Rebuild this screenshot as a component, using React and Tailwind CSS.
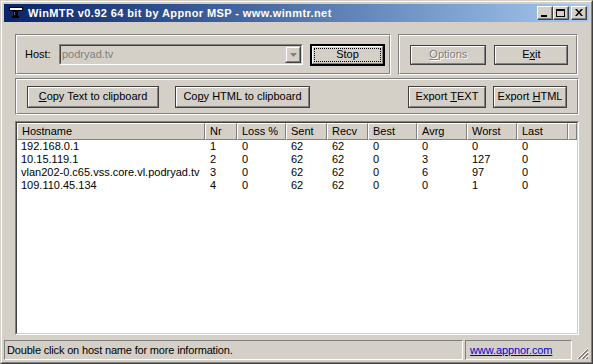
import React from 'react';

const FONT = "font-['Liberation_Sans',Arial,sans-serif]";

const COLUMNS = [
  { key: 'host',  label: 'Hostname', w: 'w-[188px]' },
  { key: 'nr',    label: 'Nr',       w: 'w-[32px]' },
  { key: 'loss',  label: 'Loss %',   w: 'w-[49px]' },
  { key: 'sent',  label: 'Sent',     w: 'w-[41px]' },
  { key: 'recv',  label: 'Recv',     w: 'w-[41px]' },
  { key: 'best',  label: 'Best',     w: 'w-[49px]' },
  { key: 'avrg',  label: 'Avrg',     w: 'w-[50px]' },
  { key: 'worst', label: 'Worst',    w: 'w-[50px]' },
  { key: 'last',  label: 'Last',     w: 'w-[51px]' },
];

const HOPS = [
  { host: '192.168.0.1',                        nr: 1, loss: 0, sent: 62, recv: 62, best: 0, avrg: 0, worst: 0,   last: 0 },
  { host: '10.15.119.1',                        nr: 2, loss: 0, sent: 62, recv: 62, best: 0, avrg: 3, worst: 127, last: 0 },
  { host: 'vlan202-0.c65.vss.core.vl.podryad.tv', nr: 3, loss: 0, sent: 62, recv: 62, best: 0, avrg: 6, worst: 97,  last: 0 },
  { host: '109.110.45.134',                     nr: 4, loss: 0, sent: 62, recv: 62, best: 0, avrg: 0, worst: 1,   last: 0 },
];

// etched group frame (dark line + white line)
function GroupBox({ className, innerClass, children }) {
  return (
    <div className={`border border-t-[#808080] border-l-[#808080] border-r-white border-b-white ${className}`}>
      <div className={`h-full border border-t-white border-l-white border-r-[#808080] border-b-[#808080] flex items-center ${innerClass}`}>
        {children}
      </div>
    </div>
  );
}

function Button({ className = '', disabled, children }) {
  return (
    <div className={`border border-[#404040] ${className}`}>
      <div className="h-full border border-t-white border-l-white border-r-[#808080] border-b-[#808080] flex items-center justify-center">
        {disabled ? (
          <span className="relative text-[#808080] [text-shadow:1px_1px_0_#ffffff]">{children}</span>
        ) : (
          <span className="text-black">{children}</span>
        )}
      </div>
    </div>
  );
}

function TitleButton({ children }) {
  return (
    <div className="w-[16px] h-[14px] bg-[#d4d0c8] border border-t-white border-l-white border-r-[#404040] border-b-[#404040]">
      <div className="h-full border-r border-b border-[#808080] flex items-center justify-center">
        {children}
      </div>
    </div>
  );
}

function AppIcon() {
  return (
    <svg width="14" height="12" viewBox="0 0 14 12" className="shrink-0">
      <rect x="0.5" y="0.5" width="13" height="3" fill="#ffffff" stroke="#000000" />
      <rect x="4" y="4" width="5" height="7" fill="#000000" />
      <rect x="5" y="5" width="1" height="3" fill="#6b6b6b" />
      <rect x="3" y="9" width="7" height="2" fill="#000000" />
    </svg>
  );
}

export default function App() {
  return (
    <div className={`w-[593px] h-[364px] bg-[#d4d0c8] border border-t-[#d4d0c8] border-l-[#d4d0c8] border-r-[#404040] border-b-[#404040] ${FONT} text-[11px] leading-none select-none`}>
      <div className="h-full border border-t-white border-l-white border-r-[#808080] border-b-[#808080] p-[2px] flex flex-col">

        {/* title bar */}
        <div className="h-[18px] shrink-0 bg-gradient-to-r from-[#0a246a] to-[#a6caf0] flex items-center pl-[5px] pr-[2px]">
          <AppIcon />
          <span className="ml-[5px] text-white font-bold text-[11px] tracking-[0.4px]">
            WinMTR v0.92 64 bit by Appnor MSP - www.winmtr.net
          </span>
          <div className="ml-auto flex items-center">
            <TitleButton>
              <div className="w-[6px] h-[2px] bg-black mt-[6px] -ml-[1px]" />
            </TitleButton>
            <TitleButton>
              <div className="w-[9px] h-[8px] border border-black border-t-2" />
            </TitleButton>
            <div className="w-[2px]" />
            <TitleButton>
              <svg width="8" height="7" viewBox="0 0 8 7">
                <path d="M0 0h2l2 2.5L6 0h2L5 3.5 8 7H6L4 4.5 2 7H0l3-3.5z" fill="#000" />
              </svg>
            </TitleButton>
          </div>
        </div>

        {/* client */}
        <div className="flex-1 flex flex-col px-[11px] pt-[12px]">
          <div className="flex gap-[7px]">
            <GroupBox className="w-[377px] h-[41px]" innerClass="pl-[8px]">
              <span className="w-[34px]">Host:</span>
              <div className="w-[244px] h-[21px] border border-t-[#808080] border-l-[#808080] border-r-white border-b-white">
                <div className="h-full border border-t-[#404040] border-l-[#404040] border-r-[#d4d0c8] border-b-[#d4d0c8] flex items-center">
                  <span className="flex-1 pl-[1px] text-[#808080]">podryad.tv</span>
                  <div className="w-[16px] h-full border border-t-[#d4d0c8] border-l-[#d4d0c8] border-r-[#404040] border-b-[#404040]">
                    <div className="h-full border border-t-white border-l-white border-r-[#808080] border-b-[#808080] flex items-center justify-center">
                      <svg width="7" height="4" viewBox="0 0 7 4">
                        <path d="M0 0h7L3.5 4z" fill="#808080" />
                      </svg>
                    </div>
                  </div>
                </div>
              </div>
              <div className="ml-[7px] w-[75px] h-[22px] border-2 border-black">
                <div className="h-full border border-t-white border-l-white border-r-[#808080] border-b-[#808080] p-[1px]">
                  <div className="h-full border border-dotted border-black flex items-center justify-center">Stop</div>
                </div>
              </div>
            </GroupBox>

            <GroupBox className="w-[180px] h-[41px]" innerClass="pl-[10px] gap-[8px]">
              <Button className="w-[76px] h-[20px]" disabled><span className="underline">O</span>ptions</Button>
              <Button className="w-[74px] h-[20px]">E<span className="underline">x</span>it</Button>
            </GroupBox>
          </div>

          <GroupBox className="mt-[3px] w-[564px] h-[37px]" innerClass="pl-[10px]">
            <Button className="w-[132px] h-[22px]"><span className="underline">C</span>opy Text to clipboard</Button>
            <Button className="ml-[16px] w-[135px] h-[22px]">Co<span className="underline">p</span>y HTML to clipboard</Button>
            <Button className="ml-auto w-[78px] h-[22px]">Export <span className="underline">T</span>EXT</Button>
            <Button className="ml-[7px] mr-[10px] w-[74px] h-[22px]">Export <span className="underline">H</span>TML</Button>
          </GroupBox>

          {/* list view */}
          <div className="mt-[6px] w-[564px] h-[214px] border border-t-[#808080] border-l-[#808080] border-r-white border-b-white">
            <div className="h-full border border-t-[#404040] border-l-[#404040] border-r-[#d4d0c8] border-b-[#d4d0c8] bg-white flex flex-col">
              <div className="flex h-[17px] shrink-0">
                {COLUMNS.map((c) => (
                  <div key={c.key} className={`${c.w} bg-[#d4d0c8] border border-t-white border-l-white border-r-[#808080] border-b-[#808080] flex items-center pl-[4px]`}>
                    {c.label}
                  </div>
                ))}
                <div className="flex-1 bg-[#d4d0c8] border border-t-white border-l-white border-r-[#808080] border-b-[#808080]" />
              </div>
              {HOPS.map((h) => (
                <div key={h.nr} className="flex h-[13px] items-center">
                  {COLUMNS.map((c) => (
                    <div key={c.key} className={`${c.w} ${c.key === 'host' ? 'pl-[4px]' : 'pl-[5px]'} whitespace-nowrap`}>
                      {h[c.key]}
                    </div>
                  ))}
                </div>
              ))}
            </div>
          </div>

          {/* status bar */}
          <div className="mt-auto -mx-[11px] h-[21px] flex items-stretch pt-[1px]">
            <div className="w-[459px] border border-t-[#808080] border-l-[#808080] border-r-white border-b-white flex items-center pl-[2px] tracking-[-0.17px]">
              Double click on host name for more information.
            </div>
            <div className="ml-[2px] w-[107px] border border-t-[#808080] border-l-[#808080] border-r-white border-b-white flex items-center pl-[4px]">
              <span className="text-[#0000cc] underline tracking-[-0.1px]">www.appnor.com</span>
            </div>
            <div className="flex-1 flex items-end justify-end">
              <svg width="13" height="13" viewBox="0 0 13 13">
                <path d="M12 1L1 12M12 5L5 12M12 9L9 12" stroke="#ffffff" strokeWidth="1" />
                <path d="M12 2L2 12M12 3L3 12M12 6L6 12M12 7L7 12M12 10L10 12M12 11L11 12" stroke="#808080" strokeWidth="1" />
              </svg>
            </div>
          </div>
        </div>
      </div>
    </div>
  );
}
